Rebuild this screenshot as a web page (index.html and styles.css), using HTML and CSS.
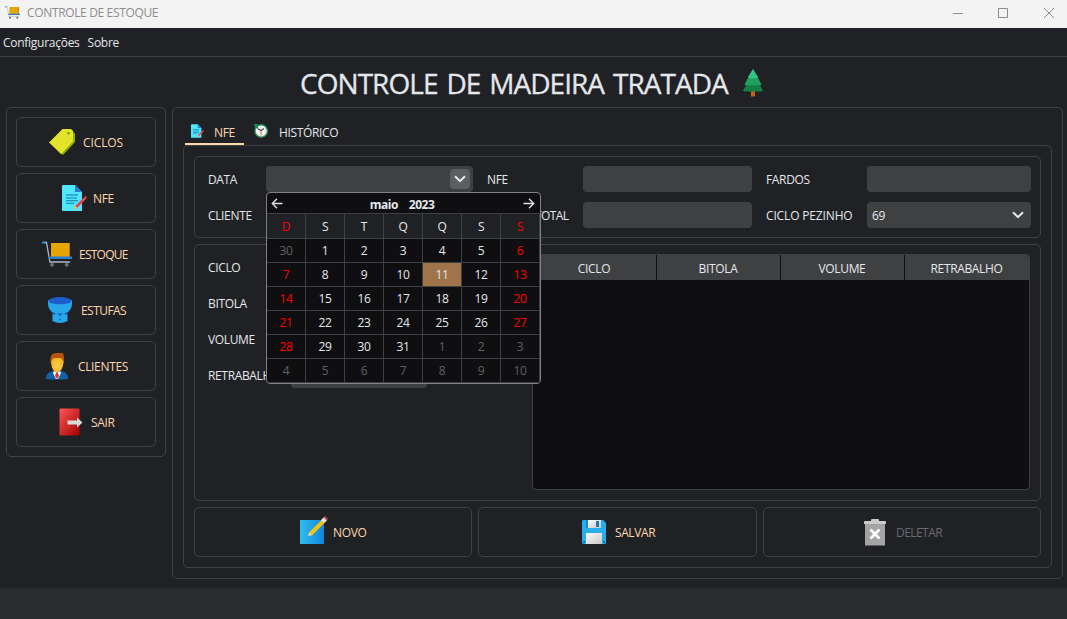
FILE: index.html
```html
<!DOCTYPE html>
<html lang="pt-BR">
<head>
<meta charset="utf-8">
<title>CONTROLE DE ESTOQUE</title>
<link rel="stylesheet" href="styles.css">
</head>
<body>
<svg class="defs" width="0" height="0">
  <defs>
    <linearGradient id="red" x1="0" y1="0" x2="1" y2="1"><stop offset="0" stop-color="#ff5757"/><stop offset="1" stop-color="#a10000"/></linearGradient>
    <linearGradient id="blue" x1="0" y1="0" x2="1" y2="0"><stop offset="0" stop-color="#32bdef"/><stop offset="1" stop-color="#0f86dc"/></linearGradient>
    <linearGradient id="paper" x1="0" y1="0" x2="1" y2="1"><stop offset="0" stop-color="#fcfcfc"/><stop offset="1" stop-color="#c8c8c8"/></linearGradient>
    <radialGradient id="face"><stop offset="0" stop-color="#ffcf54"/><stop offset="1" stop-color="#f0b421"/></radialGradient>
    <symbol id="cart" viewBox="0 0 30 26">
      <path d="M9 2h19v14H9z" fill="#e5a505"/><path d="M27 2h1v14h-1z" fill="#b77b0c"/>
      <path d="M1 1.500h3.500l3.400 19.500H28" fill="none" stroke="#a9b9c5" stroke-width="1.300"/>
      <path d="M0 .5h3v2H0z" fill="#1a8bd2"/><path d="M7 15.500h23v2.500H7z" fill="#2b7cd3"/>
      <circle cx="10" cy="23.700" r="2" fill="#666c70"/><circle cx="24.700" cy="23.700" r="2" fill="#666c70"/>
    </symbol>
    <symbol id="doc" viewBox="0 0 25 26">
      <path d="M1 0h12l7 7v19H1q-1 0-1-1V1q0-1 1-1z" fill="#50e6ff"/><path d="M13 0l7 7h-7z" fill="#2b7cd3"/>
      <path d="M4 10h12M4 13h11M4 15.700h12M4 18.300h8" stroke="#087ca5" stroke-width="1.100"/>
      <path d="M12.500 24l1.200-3.500L23.500 11l1.500 1-1 2-9 9z" fill="#ed3f47"/><path d="M12.200 24.200l1.200-3 1.800 1.800zM20.700 14l1.500 1.400" fill="#ffc35b" stroke="#ffb35b" stroke-width=".6"/>
    </symbol>
  </defs>
</svg>
<div class="window">
  <header class="titlebar">
    <svg class="app-icon"><use href="#cart"/></svg>
    <span class="caption">CONTROLE DE ESTOQUE</span>
    <svg class="controls" width="104" height="12" viewBox="0 0 104 12"><path d="M1 6.500h10M46.500 1.500h9v9h-9zM92 1l10 10M102 1L92 11" fill="none" stroke="#8b8b8b"/></svg>
  </header>
  <nav class="menubar"><span>Configurações</span><span>Sobre</span></nav>
  <h1 class="heading"><span>CONTROLE DE MADEIRA TRATADA</span>
    <svg width="20" height="28" viewBox="0 0 20 28"><path d="M8 22h4v5.500H8z" fill="#c3601a"/><path d="M5 13h10l5 8.500-1 1H1l-1-1z" fill="#157e43"/><path d="M6 7h8l4.500 8.500-1 .8h-15l-1-.8z" fill="#20a05e"/><path d="M10 0l5 8-1 1.200H6L5 8z" fill="#33c481"/></svg>
  </h1>
  <div class="workspace">
    <aside class="sidebar frame">
      <button class="btn ciclos"><svg width="27" height="26" viewBox="0 0 27 26"><path d="M17 1l6 0 3 4v8L14 26l-3-2z" fill="#8db600"/><path d="M13.500 0H22l2 2v10.500L12 25 0 13.500z" fill="#e4e32b"/><circle cx="19.500" cy="4.200" r="1.200" fill="#7b9b10"/></svg><span>CICLOS</span></button>
      <button class="btn nfe"><svg width="25" height="26"><use href="#doc"/></svg><span>NFE</span></button>
      <button class="btn estoque"><svg width="30" height="26"><use href="#cart"/></svg><span>ESTOQUE</span></button>
      <button class="btn estufas"><svg width="24" height="26" viewBox="0 0 24 26"><path d="M0 3h24v4q-.5 6-5 9l.5 1v7q-7.500 4-15 0v-7l.5-1Q.5 13 0 7z" fill="#27a7e9"/><ellipse cx="12" cy="3.700" rx="11.700" ry="3.600" fill="#1b5dcb"/><path d="M4.500 15.500h2l1 2h-2zM17.500 15.500h2l-1 2h-2zM9 16q3 1.300 6 0l-3 3z" fill="#1450b3"/><circle cx="12" cy="22.500" r="1" fill="#166bc5"/></svg><span>ESTUFAS</span></button>
      <button class="btn clientes"><svg width="22" height="27" viewBox="0 0 22 27"><path d="M0 26v-2q1-5 7-6h8q6 1 7 6v2q-11 1-22 0z" fill="#1261a5"/><path d="M8 18l3 2 3-2 1 2-3 6h-2l-3-6z" fill="#fff"/><path d="M10 20h2l1 3-2 3-2-3z" fill="#d9303a"/><path d="M4.500 10V5Q5 0 11 0h6l1 4v6z" fill="#b85410"/><path d="M5 9q1-3 3-4h7q2 2 2.500 4-.5 7-4 9.500l-2.500 1-2.500-1Q5.500 16 5 9z" fill="url(#face)"/></svg><span>CLIENTES</span></button>
      <button class="btn sair"><svg width="24" height="28" viewBox="0 0 24 28"><rect x=".5" y=".5" width="20" height="27" rx=".8" fill="url(#red)"/><path d="M8.500 12.500H18V9.500l5.500 5-5.500 5v-3H8.500z" fill="#d9d9d9"/></svg><span>SAIR</span></button>
    </aside>
    <main class="content frame">
      <div class="tabs">
        <div class="tab active"><svg width="13" height="14"><use href="#doc"/></svg><span>NFE</span></div>
        <div class="tab"><svg width="14" height="14" viewBox="0 0 14 14"><circle cx="7.200" cy="7" r="6.100" fill="#f1f1f1" stroke="#399f69" stroke-width="1.300"/><path d="M0 0h4v4H1z" fill="#218350"/><path d="M3.500 4.500l3.500 2 3-2" fill="none" stroke="#46484a" stroke-width="1.200"/><path d="M7 7v4.500" stroke="#e39b82" stroke-width="1.500"/></svg><span>HISTÓRICO</span></div>
      </div>
      <div class="pane frame">
        <section class="fields frame">
          <label>DATA</label>
          <div class="input date"><span class="drop"><svg width="12" height="8" viewBox="0 0 12 8"><path d="M1 1.200l5 5 5-5" fill="none" stroke="#e8eaed" stroke-width="2"/></svg></span></div>
          <label>NFE</label><div class="input"></div>
          <label>FARDOS</label><div class="input"></div>
          <label>CLIENTE</label><div class="input"></div>
          <label class="total">TOTAL</label><div class="input"></div>
          <label class="pezinho">CICLO PEZINHO</label><div class="input select"><span>69</span><svg width="12" height="8" viewBox="0 0 12 8"><path d="M1 1.200l5 5 5-5" fill="none" stroke="#e8eaed" stroke-width="2"/></svg></div>
        </section>
        <section class="details frame">
          <div class="form">
            <label>CICLO</label><div class="input"></div>
            <label>BITOLA</label><div class="input"></div>
            <label>VOLUME</label><div class="input"></div>
            <label>RETRABALHO</label><div class="input"></div>
          </div>
          <div class="table"><div class="thead"><span>CICLO</span><span>BITOLA</span><span>VOLUME</span><span>RETRABALHO</span></div></div>
        </section>
        <div class="actions">
          <button class="btn novo"><svg width="28" height="28" viewBox="0 0 28 28"><rect y="4" width="24" height="24" rx=".8" fill="url(#blue)"/><path d="M10 18.500L25.500 3" stroke="#f3c40d" stroke-width="4"/><path d="M8 20l1-3.500 2.500 2.500z" fill="#e4d8cc"/><path d="M22.500 5.500l3-3" stroke="#e1e2e3" stroke-width="4"/><path d="M25 3l1.500-1.500" stroke="#c94c5b" stroke-width="4"/></svg><span>NOVO</span></button>
          <button class="btn salvar"><svg width="24" height="24" viewBox="0 0 24 24"><path d="M1 0h20l3 3v20l-1 1H1l-1-1V1z" fill="#27aeeb"/><path d="M4 0h2v8H4z" fill="#168bca"/><path d="M6 0h13v8H6z" fill="url(#paper)"/><path d="M14 1h3v6h-3z" fill="#187caf"/><path d="M4 13h16v11H4z" fill="url(#paper)"/><path d="M1 21h2v2H1zM21 21h2v2h-2z" fill="#1276b1"/></svg><span>SALVAR</span></button>
          <button class="btn disabled"><svg width="22" height="27" viewBox="0 0 22 27"><path d="M1 4h20v22.500H1z" fill="#a3a3a3"/><path d="M0 3q0-1 1-1h6V1q0-1 1-1h6q1 0 1 1v1h6q1 0 1 1v2H0z" fill="#c9c9c9"/><path d="M6.500 10.500l9 9M15.500 10.500l-9 9" stroke="#fff" stroke-width="2.800"/></svg><span>DELETAR</span></button>
        </div>
      </div>
    </main>
  </div>
  <footer class="statusbar"></footer>
  <div class="calendar">
    <div class="cal-nav">
      <svg width="12" height="11" viewBox="0 0 12 11"><path d="M11.500 5.500H1.500M6 .8L1.300 5.500 6 10.200" fill="none" stroke="#dddedf" stroke-width="1.400"/></svg>
      <strong><span>maio</span><span>2023</span></strong>
      <svg width="12" height="11" viewBox="0 0 12 11"><path d="M.5 5.500h10M6 .8l4.700 4.700L6 10.200" fill="none" stroke="#dddedf" stroke-width="1.400"/></svg>
    </div>
    <div class="days">
      <b class="we">D</b><b>S</b><b>T</b><b>Q</b><b>Q</b><b>S</b><b class="we">S</b>
      <i class="off">30</i><i>1</i><i>2</i><i>3</i><i>4</i><i>5</i><i class="we">6</i>
      <i class="we">7</i><i>8</i><i>9</i><i>10</i><i class="today">11</i><i>12</i><i class="we">13</i>
      <i class="we">14</i><i>15</i><i>16</i><i>17</i><i>18</i><i>19</i><i class="we">20</i>
      <i class="we">21</i><i>22</i><i>23</i><i>24</i><i>25</i><i>26</i><i class="we">27</i>
      <i class="we">28</i><i>29</i><i>30</i><i>31</i><i class="off">1</i><i class="off">2</i><i class="off">3</i>
      <i class="off">4</i><i class="off">5</i><i class="off">6</i><i class="off">7</i><i class="off">8</i><i class="off">9</i><i class="off">10</i>
    </div>
  </div>
</div>
</body>
</html>
```
FILE: styles.css
```css
* { box-sizing: border-box; }
body { margin: 0; font: 12px/16px "Open Sans", "Noto Sans", sans-serif; letter-spacing: -0.35px; color: #e4e7eb; }
svg { display: block; flex: none; }
.defs { position: absolute; }
.window { position: relative; width: 1067px; height: 619px; background: #202124; display: flex; flex-direction: column; overflow: hidden; }
.titlebar { height: 28px; flex: none; background: #f3f3f3; color: #8d8d8d; display: flex; align-items: center; padding: 0 11px 3px 5px; }
.app-icon { width: 15px; height: 13px; margin-right: 7px; }
.caption { flex: 1; }
.menubar { height: 29px; flex: none; border-bottom: 1px solid #3f4042; display: flex; align-items: center; gap: 8px; padding: 1px 3px 0; letter-spacing: -0.27px; }
.heading { height: 50px; flex: none; margin: 0; display: flex; align-items: center; gap: 15px; padding: 1px 0 0 300px; font: 400 28px/36px "Open Sans", sans-serif; letter-spacing: -0.95px; word-spacing: 2.5px; -webkit-text-stroke: 0.3px; }
.frame { border: 1px solid #3f4042; border-radius: 5px; }
.workspace { flex: none; display: flex; align-items: flex-start; gap: 6px; padding: 0 4px 0 6px; height: 481px; }
.sidebar { width: 160px; height: 350px; padding: 9px; display: flex; flex-direction: column; gap: 6px; }
.btn { height: 50px; border: 1px solid #3f4042; border-radius: 5px; background: transparent; color: #fdd6ae; font: inherit; letter-spacing: inherit; display: flex; align-items: center; justify-content: flex-start; gap: 8px; padding: 0; }
.btn span { padding-top: 1px; }
.ciclos { padding-left: 32px; gap: 7px; letter-spacing: -0.1px; }
.nfe { padding-left: 45px; gap: 6px; }
.estoque { padding-left: 25px; gap: 7px; letter-spacing: -0.75px; }
.estufas { padding-left: 31px; gap: 9px; letter-spacing: -0.55px; }
.clientes { padding-left: 29px; gap: 10px; }
.sair { padding-left: 42px; gap: 8px; }
.content { flex: 1; height: 472px; padding: 9px 10px 10px; display: flex; flex-direction: column; }
.tabs { display: flex; height: 28px; padding-left: 2px; }
.tab { height: 28px; display: flex; align-items: center; gap: 11px; padding: 3px 10px 0; }
.tab.active { width: 59px; padding: 5px 0 0 6px; gap: 10px; border-bottom: 2px solid #fdd6ae; color: #fdd6ae; }
.tab svg { margin-bottom: 3px; }
.tab span { padding-top: 1px; }
.pane { height: 423px; padding: 10px; display: flex; flex-direction: column; gap: 6px; }
.fields { height: 82px; padding: 9px 9px 9px 13px; display: grid; grid-template-columns: 58px 207px 14px 96px 169px 14px 101px 164px; grid-template-rows: 26px 26px; row-gap: 10px; align-items: center; }
.fields label, .form label { padding-top: 1px; }
.fields label:nth-of-type(3n+2) { grid-column: 4; }
.fields label:nth-of-type(3n) { grid-column: 7; }
.fields label:nth-of-type(3n+1) { grid-column: 1; }
.fields .total { padding-left: 48px; letter-spacing: -0.6px; }
.fields .pezinho { letter-spacing: -0.15px; }
.input { height: 26px; border-radius: 4px; background: #3f4042; display: flex; align-items: center; }
.date { justify-content: flex-end; padding-right: 3px; }
.drop { width: 20px; height: 20px; border-radius: 4px; background: #5c5e61; display: grid; place-items: center; }
.select { justify-content: space-between; padding: 0 7px 0 5px; }
.select span { padding-top: 1px; }
.details { height: 257px; padding: 9px 10px 11px; display: flex; justify-content: space-between; }
.form { display: grid; grid-template-columns: 83px 136px; grid-auto-rows: 26px; row-gap: 10px; align-items: center; padding-left: 3px; }
.table { width: 498px; height: 236px; border: 1px solid #3f4042; border-radius: 4px; background: #0f0f11; overflow: hidden; }
.thead { display: grid; grid-template-columns: 123px 124px 124px 1fr; height: 25px; line-height: 27px; text-align: center; background: #3f4042; }
.thead span + span { border-left: 1px solid #0f0f11; }
.thead span { padding-right: 1px; }
.actions { display: grid; grid-template-columns: 278px 279px 278px; gap: 6px; }
.novo { padding-left: 105px; gap: 5px; letter-spacing: -0.3px; }
.novo svg { margin-bottom: 4px; }
.salvar { padding-left: 103px; gap: 9px; letter-spacing: -0.4px; }
.disabled { color: #6a6b6e; padding-left: 100px; gap: 10px; letter-spacing: -0.55px; }
.statusbar { flex: 1; background: #2a2b2e; }
.calendar { position: absolute; left: 266px; top: 192px; width: 275px; height: 192px; border: 1px solid #808284; border-radius: 4px; background: #0f0f11; overflow: hidden; }
.cal-nav { height: 21px; border-bottom: 1px solid #3f4042; display: flex; align-items: center; justify-content: space-between; padding: 0 5px 0 4px; }
.cal-nav strong { display: flex; gap: 11px; padding: 4px 2px 0 0; letter-spacing: -0.5px; }
.days { display: grid; grid-template-columns: repeat(7, 39px); grid-template-rows: 25px; grid-auto-rows: 24px; }
.days > * { font-weight: 400; font-style: normal; display: grid; place-items: center; border-right: 1px solid #3f4042; border-bottom: 1px solid #3f4042; padding-top: 1px; }
.days b { background: #202124; }
.days .we { color: #f00; }
.days .off { color: #5f6063; }
.days .today { background: #a07449; }
```
